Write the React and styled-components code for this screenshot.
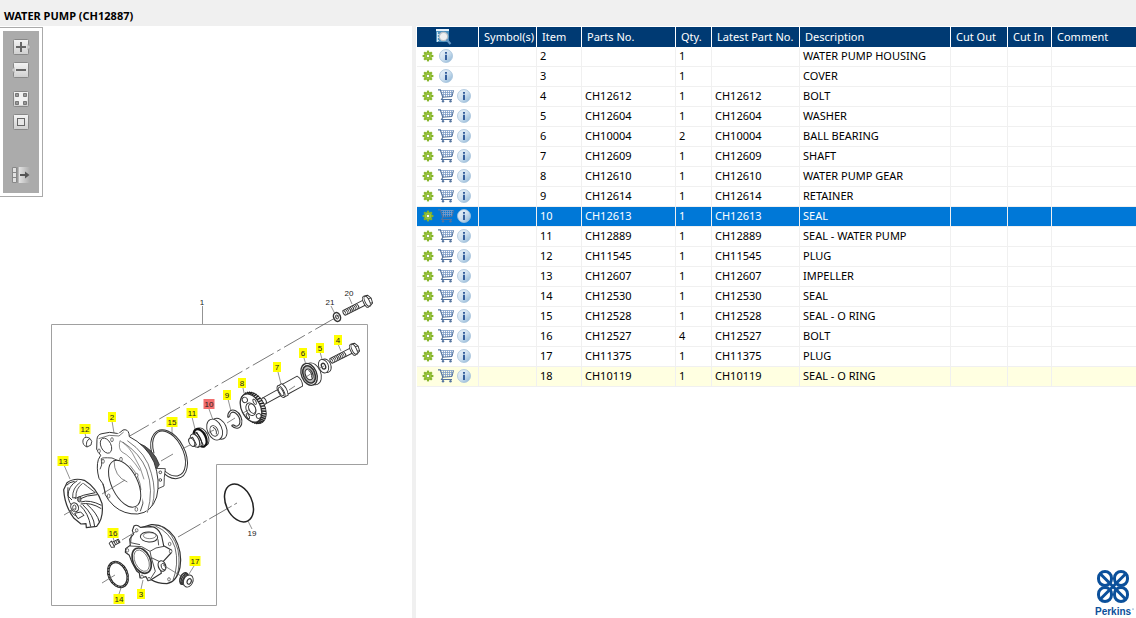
import React from 'react';
import styled, { createGlobalStyle } from 'styled-components';

const GlobalStyle = createGlobalStyle`
  *, *::before, *::after { box-sizing: border-box; }
  body { margin: 0; background: #fff; }
`;

const Page = styled.div`
  display: flex;
  flex-direction: column;
  min-height: 100vh;
  background: #fff;
  color: #000;
  font: 11px/16px "Noto Sans", "Open Sans", sans-serif;
`;

const TitleBar = styled.header`
  height: 26px;
  padding: 8px 4px 2px;
  background: #f0f0f0;
`;

const Title = styled.h1`
  margin: 0;
  font-size: 11px;
  line-height: 16px;
  font-weight: 700;
`;

const Workspace = styled.main`
  flex: 1;
  display: grid;
  grid-template-columns: 412px 4px minmax(0, 1fr);
`;

const DrawingPane = styled.section`
  position: relative;
  overflow: hidden;
`;

const Splitter = styled.div`
  background: #f0f0f0;
`;

const PartsPane = styled.section`
  display: flex;
  flex-direction: column;
  padding: 1px 0 1px 1px;
`;

const Toolbar = styled.div`
  position: absolute;
  top: 1px;
  left: 0;
  width: 43px;
  border: 1px solid #aaa;
  border-left: 0;
  padding: 3px;
  background: #fff;
`;

const ToolList = styled.div`
  display: flex;
  flex-direction: column;
  align-items: center;
  gap: 7px;
  height: 162px;
  padding: 8px 0;
  background: #ababab;
`;

const ToolButton = styled.button`
  display: block;
  width: 20px;
  height: 16px;
  padding: 0;
  border: 0;
  background: none;
  margin-top: ${(p) => p.$space || 0}px;
  svg { display: block; }
`;

const Diagram = styled.svg`
  display: block;
  width: 412px;
  height: 592px;
  font: 8px "Liberation Sans", Arial, sans-serif;
`;

const Table = styled.table`
  width: 100%;
  table-layout: fixed;
  border-collapse: separate;
  border-spacing: 0;
`;

const HeadCell = styled.th`
  height: 20px;
  padding: 0 0 0 5px;
  border-right: 1px solid #fff;
  background: #003a73;
  color: #fff;
  font-weight: 400;
  text-align: left;
  white-space: nowrap;
  line-height: 16px;
  &:last-child { border-right: 0; }
  svg { display: block; margin-left: 13px; }
`;

const rowColors = {
  normal: ['#fff', '#000'],
  selected: ['#0078d7', '#fff'],
  last: ['#ffffe1', '#000'],
};

const Row = styled.tr`
  background: ${(p) => rowColors[p.$tone][0]};
  color: ${(p) => rowColors[p.$tone][1]};
`;

const Cell = styled.td`
  height: 20px;
  padding: 0 0 1px 3px;
  border-right: 1px solid #f0f0f0;
  border-bottom: 1px solid #f0f0f0;
  line-height: 16px;
  white-space: nowrap;
  overflow: hidden;
  &:last-child { border-right: 0; }
`;

const Actions = styled.div`
  display: flex;
  align-items: center;
  margin-left: -1px;
`;

const IconButton = styled.button`
  display: flex;
  align-items: center;
  justify-content: center;
  width: 18px;
  height: 16px;
  padding: 0;
  border: 0;
  background: none;
`;

const Brand = styled.footer`
  display: flex;
  justify-content: flex-end;
  margin-top: auto;
  padding-right: 2px;
  svg { display: block; }
`;

/* ---------- icons ---------- */

const GearIcon = () => (
  <svg width="12" height="12" viewBox="-6 -6 12 12">
    <g fill="#86b52a">
      {[0, 45, 90, 135].map((a) => (
        <rect key={a} x="-1.1" y="-5.4" width="2.2" height="10.8" transform={`rotate(${a})`} />
      ))}
      <circle r="3.9" />
    </g>
    <circle r="2.7" fill="none" stroke="#9fc93c" />
    <circle r="1.7" fill="#fff" stroke="#6c9a1b" strokeWidth=".6" />
  </svg>
);

const CartIcon = () => (
  <svg width="16" height="14" viewBox="0 0 16 14" fill="none" stroke="#54749f">
    <path d="M3 1.500H15.500M3.500 3.500H15M4.200 5.500H14.400M5.500 1.500V8M7.500 1.500V8M9.500 1.500V8M11.500 1.500V8M13.500 1.500V7" stroke="#7f9dc6" strokeWidth=".8" />
    <path d="M15.500 1.500 14 7.500 4.800 8.200" />
    <path d="M0 .8H2.300L4.800 8.200 3.600 10.500H14" strokeWidth="1.200" />
    <circle cx="5" cy="12.300" r="1.200" fill="#54749f" stroke="none" />
    <circle cx="12.500" cy="12.300" r="1.200" fill="#54749f" stroke="none" />
  </svg>
);

const InfoIcon = () => (
  <svg width="14" height="14" viewBox="0 0 14 14">
    <defs>
      <linearGradient id="infoFill" x1="0" y1="0" x2="1" y2="1">
        <stop offset="0" stopColor="#eff6fb" />
        <stop offset=".5" stopColor="#cfe0ef" />
        <stop offset="1" stopColor="#86b1d4" />
      </linearGradient>
    </defs>
    <circle cx="7" cy="7" r="6.5" fill="url(#infoFill)" stroke="#a5c2db" strokeWidth=".8" />
    <path d="M6 3h2v1.700H6zM6 5.700h2v5.200H6z" fill="#355f9c" />
  </svg>
);

const PreviewIcon = () => (
  <svg width="17" height="16" viewBox="0 0 17 16">
    <rect x="1" y="0" width="13" height="2" fill="#e7f2fb" />
    <rect x="1" y="2" width="13" height="11" fill="#4c91bf" />
    <path d="M2.500 3V13M4 5.500H2M4 8.500H2M4 11.500H2" stroke="#e7f2fb" strokeWidth=".8" />
    <circle cx="8.500" cy="7.500" r="4.200" fill="#eef0f1" stroke="#b9c0c6" strokeWidth="1.300" />
    <path d="M11.500 10.500 15.500 15" stroke="#6698c4" strokeWidth="2.200" />
  </svg>
);

const ToolFace = () => (
  <>
    <linearGradient id="toolFace" x1="0" y1="0" x2="0" y2="1">
      <stop offset="0" stopColor="#f4f4f4" />
      <stop offset="1" stopColor="#cfcfcf" />
    </linearGradient>
    <rect x="2.500" y=".5" width="15" height="15" rx="1" fill="url(#toolFace)" stroke="#888" />
  </>
);

const toolDrawings = {
  expand: (
    <>
      <ToolFace />
      <path d="M17 5.500 19.300 8 17 10.500z" fill="#e4e4e4" stroke="#999" strokeWidth=".6" />
      <path d="M5 8H15M10 3V13" stroke="#666" strokeWidth="2" />
    </>
  ),
  collapse: (
    <>
      <ToolFace />
      <path d="M3 5.500.7 8 3 10.500z" fill="#e4e4e4" stroke="#999" strokeWidth=".6" />
      <path d="M5 8H15" stroke="#666" strokeWidth="2" />
    </>
  ),
  tiles: (
    <>
      <ToolFace />
      <path d="M8 2H12V14H8zM4 6H16V10H4z" fill="#f1f1f1" />
      <path d="M4.500 2.500h3v3h-3zM12.500 2.500h3v3h-3zM4.500 10.500h3v3h-3zM12.500 10.500h3v3h-3z" fill="#999" stroke="#777" />
    </>
  ),
  fit: (
    <>
      <ToolFace />
      <rect x="6.500" y="4.500" width="7" height="7" fill="#e6e6e6" stroke="#666" />
    </>
  ),
  panel: (
    <>
      <linearGradient id="panelFade">
        <stop offset="0" stopColor="#e8e8e8" />
        <stop offset="1" stopColor="#e8e8e8" stopOpacity="0" />
      </linearGradient>
      <rect x="7" y="0" width="12" height="16" fill="url(#panelFade)" />
      <path d="M1.500.5h4v15h-4zM1.500 5.500h4M1.500 10.500h4" fill="#e2e2e2" stroke="#888" />
      <path d="M7 0V16" stroke="#888" />
      <path d="M9 8H15" stroke="#555" strokeWidth="2" />
      <path d="M14 4.500 18.500 8 14 11.500z" fill="#555" />
    </>
  ),
};

const tools = [
  { id: 'expand', label: 'Zoom in' },
  { id: 'collapse', label: 'Zoom out' },
  { id: 'tiles', label: 'Tile view', space: 6 },
  { id: 'fit', label: 'Fit to window' },
  { id: 'panel', label: 'Move panel', space: 30 },
];

const PerkinsLogo = () => (
  <svg width="40" height="48" viewBox="0 0 40 48" role="img" aria-label="Perkins">
    <g fill="none" stroke="#0b509b" strokeWidth="3">
      <rect x="4.500" y="2.500" width="13" height="14" rx="6.500" />
      <rect x="20.500" y="2.500" width="13" height="14" rx="6.500" />
      <rect x="4.500" y="18.500" width="13" height="14" rx="6.500" />
      <rect x="20.500" y="18.500" width="13" height="14" rx="6.500" />
      <path d="M6 4.500 32 30.500M32 4.500 6 30.500" strokeWidth="3" />
    </g>
    <text x="1" y="46" fontFamily="Liberation Sans, Arial, sans-serif" fontWeight="700" fontSize="10" fill="#0b509b">Perkins</text>
    <circle cx="39" cy="40" r=".6" fill="#0b509b" />
  </svg>
);

/* ---------- exploded drawing ---------- */

const range = (n) => Array.from({ length: n }, (_, i) => i);

const Bolt = ({ x, y, s = 1 }) => (
  <g transform={`translate(${x} ${y}) rotate(-27) scale(${s})`}>
    <path d="M0-2.700H24V2.700H0Q-1.600 0 0-2.700z" />
    {range(9).map((i) => (
      <path key={i} d={`M${1 + i * 1.8}-2.800q1.400 2.800 0 5.600`} />
    ))}
    <ellipse cx="24.500" cy="0" rx="2.400" ry="6" />
    <path d="M25-6 29-5.200 31-1 30 4 26 6" />
    <ellipse cx="26" cy="0" rx="2.200" ry="5.400" />
    <path d="M27.800-2 30.800-1M27.800 2.800 30 4" />
  </g>
);

const Gear = () => (
  <g transform="translate(251 408) rotate(-26)">
    <ellipse cx="3" cy="1.500" rx="10.500" ry="16.500" />
    {range(36).map((i) => {
      const a = (i * Math.PI) / 18;
      const c = Math.cos(a);
      const s = Math.sin(a);
      return (
        <path key={i} d={`M${9 * c} ${14.5 * s}L${11 * c + 2.6} ${17 * s + 1}`} stroke="#222" strokeWidth="1.500" />
      );
    })}
    <ellipse rx="9.500" ry="15" strokeWidth="1.300" />
    <ellipse cx="-.6" cy="1" rx="4.600" ry="6.600" />
    <ellipse cx=".8" cy="1" rx="3.200" ry="5" />
    <ellipse cx="-2" cy="-10" rx="2.600" ry="2.800" />
    <ellipse cx="3.400" cy="10.500" rx="2.400" ry="2.400" />
    <ellipse cx="6" cy="-4" rx="1.300" ry="2.800" />
    <ellipse cx="-6.400" cy="6" rx="1.200" ry="2.800" />
  </g>
);

const Housing = () => (
  <g transform="translate(40 400) scale(.3333)" strokeWidth="2.600">
    <path d="M292 128Q340 144 358 194L345 212Q320 160 292 128z" fill="#555" />
    <path d="M340 205 376 206 373 232 372 258 350 268z" />
    <circle cx="361" cy="217" r="4" />
    <circle cx="361" cy="240" r="4" />
    <path d="M170 148 171 118Q172 103 186 101L209 97 236 101 249 90Q263 86 267 101L268 110Q318 135 342 186 362 242 350 291 334 338 293 342 252 344 222 318 203 300 196 284L190 253 177 235Q168 202 175 179L182 166z" strokeWidth="3" />
    <path d="M184 176Q186 172 216 174 268 192 295 236 322 290 301 334M184 176Q188 198 180 208M196 280Q194 264 188 252" />
    <path d="M176 116 208 106 237 108 251 96M248 126Q300 160 320 210 342 270 322 338M262 122Q320 160 334 220 350 274 336 318" strokeWidth="2" />
    <path d="M240 122Q270 140 286 176 302 200 312 238M240 122Q234 146 246 156 272 168 300 212" strokeWidth="1.600" />
    <ellipse cx="198" cy="137" rx="15" ry="24" transform="rotate(-26 198 137)" strokeWidth="2.500" />
    <ellipse cx="254" cy="251" rx="39" ry="76" transform="rotate(-26 254 251)" strokeWidth="3" />
    <path d="M222 180Q222 230 262 246M270 196Q300 230 303 270" strokeWidth="1.800" fill="none" />
    {[[216, 119], [177, 153], [189, 184], [243, 178], [290, 226], [206, 288], [289, 328]].map(([x, y]) => (
      <ellipse key={x} cx={x} cy={y} rx="4" ry="6" strokeWidth="2" />
    ))}
  </g>
);

const Impeller = () => (
  <g transform="translate(40 400) scale(.3333)" strokeWidth="2.600">
    <path d="M71 269 81 248Q103 232 133 241 170 263 186 310 192 354 170 379L139 383 138 371 123 372 102 355Q74 319 71 269z" strokeWidth="3.600" />
    <g fill="none">
      <path d="M80 256Q88 246 104 244M84 262Q80 300 96 318M112 242Q84 258 84 288L96 300" strokeWidth="3" />
      <path d="M122 246Q96 264 98 294L108 292Q106 266 128 250" />
      <path d="M104 296Q128 284 166 278M112 300Q142 284 172 284M122 306Q150 298 184 316M122 312Q152 306 184 326" strokeWidth="3" />
      <path d="M120 316Q146 340 152 380M128 314Q162 346 164 380M140 312Q172 340 178 366" strokeWidth="3" />
      <path d="M130 250Q158 272 166 278M90 330Q98 346 116 352" />
    </g>
    <ellipse cx="104" cy="322" rx="11" ry="14" transform="rotate(-25 104 322)" strokeWidth="3" />
    <ellipse cx="103" cy="323" rx="5" ry="8" />
    <ellipse cx="118" cy="298" rx="5" ry="8" fill="#999" />
    <path d="M104 340 122 336 132 346 114 356z" strokeWidth="3" />
  </g>
);

const Cover = () => (
  <g transform="translate(90 500) scale(.3333)" strokeWidth="2.600">
    <path d="M150 84 184 74Q225 72 253 111 278 155 270 202 261 245 231 251 201 250 184 239z" strokeWidth="3.600" />
    <path d="M196 78Q240 96 255 142 268 192 248 244M212 78Q250 98 264 150 272 195 260 228" strokeWidth="2.200" />
    <path d="M127 92 132 78Q140 72 151 82L182 80Q204 80 215 108L221 137 244 150 243 159 220 184 211 203 214 220 182 240 174 242 168 230 150 234 148 219 140 213 125 185 118 166 106 157 107 146 121 136 119 117 131 102z" strokeWidth="3.400" />
    <ellipse cx="155" cy="182" rx="26" ry="40" transform="rotate(-25 155 182)" strokeWidth="5" />
    <ellipse cx="155" cy="182" rx="20" ry="34" transform="rotate(-25 155 182)" strokeWidth="1.800" />
    <ellipse cx="177" cy="111" rx="26" ry="15" transform="rotate(4 177 111)" strokeWidth="3" />
    <ellipse cx="179" cy="107" rx="19" ry="9" strokeWidth="1.800" />
    <g fill="none">
      <path d="M120 138 155 140 180 154 198 144 222 139M180 154 184 173 207 184M184 173 196 214 182 236M124 104 122 128 150 134M204 118 206 136" />
    </g>
    <ellipse cx="216" cy="198" rx="11" ry="16" transform="rotate(-20 216 198)" strokeWidth="3.600" />
    <ellipse cx="220" cy="200" rx="6" ry="10" transform="rotate(-20 220 200)" />
    {[[140, 91], [112, 151], [242, 154], [177, 237], [237, 238], [239, 132], [156, 230]].map(([x, y]) => (
      <ellipse key={x} cx={x} cy={y} rx="4" ry="5" strokeWidth="2" />
    ))}
  </g>
);

const callouts = [
  ['1', 202, 302], ['20', 349, 293], ['21', 330, 302], ['19', 252, 533],
  ['4', 338, 340, 'y'], ['5', 320, 348, 'y'], ['6', 303, 353, 'y'], ['7', 277, 367, 'y'],
  ['8', 242, 383, 'y'], ['9', 227, 395, 'y'], ['10', 209, 404, 'r'], ['11', 192, 413, 'y'],
  ['15', 172, 422, 'y'], ['2', 112, 417, 'y'], ['12', 85, 429, 'y'], ['13', 63, 461, 'y'],
  ['16', 113, 533, 'y'], ['17', 195, 561, 'y'], ['14', 119, 599, 'y'], ['3', 141, 594, 'y'],
];

const calloutFill = { y: '#ffff00', r: '#f26d6d' };

const Callout = ({ text, x, y, tone }) => {
  const w = text.length > 1 ? 11 : 8;
  return (
    <g>
      {tone && <rect x={x - w / 2} y={y - 5} width={w} height="10" fill={calloutFill[tone]} />}
      <text x={x} y={y + 3} textAnchor="middle" fill="#222">{text}</text>
    </g>
  );
};

const PumpDiagram = () => (
  <Diagram viewBox="0 26 412 592" role="img" aria-label="Exploded view of the water pump">
    <path d="M51.500 324.500H367.500V464.500H216.500V605.500H51.500z" fill="none" stroke="#a0a0a0" />
    <g fill="none" stroke="#777" strokeWidth=".8">
      <path d="M202.500 306V324M349 297 352 304M331 306 335 314M338 344 341 351M320 352 322 359M304 358 306 365M278 372 281 384M243 388 244 393M228 399 231 411M209 409 213 420M192 417 195 429M172 427V433M112 421 114 433M85 433 86 438M64 465 70 479M113 537 114 541M194 566 189 574M119 594 121 588M141 589 143 580M252 529 248 521" />
      <path d="M128 437 335 318" strokeDasharray="24 4 4 4" stroke="#555" />
      <path d="M178 537 237 503" strokeDasharray="26 3 4 3" stroke="#555" />
    </g>
    <g fill="#fff" stroke="#333" strokeWidth=".9" strokeLinejoin="round">
      <Bolt x={331} y={361} />
      <Bolt x={344} y={313} />
      <g transform="rotate(-22 337 317)">
        <ellipse cx="337" cy="317" rx="3.400" ry="4.500" strokeWidth="1.500" />
        <ellipse cx="337" cy="317" rx="1.300" ry="2" />
      </g>
      <g transform="rotate(-22 324 366)">
        <ellipse cx="326" cy="366.500" rx="4.800" ry="7" />
        <ellipse cx="323.500" cy="366" rx="4.800" ry="7" />
        <ellipse cx="323.500" cy="366" rx="2" ry="3" strokeWidth="1.300" />
      </g>
      <g transform="rotate(-22 310 374)">
        <ellipse cx="313" cy="375" rx="7.600" ry="11.400" />
        <ellipse cx="309" cy="374" rx="7.600" ry="11.400" strokeWidth="1.300" />
        <ellipse cx="309" cy="374" rx="5.800" ry="9" fill="#bbb" strokeWidth="1.600" />
        <ellipse cx="309" cy="374" rx="3.600" ry="5.600" strokeWidth="1.200" />
        <path d="M310 370q3 4 0 8" fill="none" />
      </g>
      <g transform="translate(264 401) rotate(-29)">
        <path d="M0-3.400H20V3.400H0z" />
        <ellipse cx="0" cy="0" rx="2" ry="3.400" />
        <path d="M24-5.600H41Q44 0 41 5.600H24z" />
        <path d="M19-6.500H24Q27 0 24 6.500H19z" />
        <ellipse cx="19.500" cy="0" rx="2.600" ry="6.500" />
        <ellipse cx="19.500" cy="0" rx="1.800" ry="4.600" />
      </g>
      <Gear />
      <g transform="rotate(-24 234 419)" fill="none">
        <path d="M229 415A6.500 9.500 0 1 1 229 424M231 415A4.600 7.400 0 1 1 231 424M229 415H231M229 424H231" strokeWidth="1.100" />
      </g>
      <g transform="rotate(-24 216 429)">
        <ellipse cx="219" cy="430" rx="7.200" ry="11" />
        <ellipse cx="214.500" cy="429" rx="7.200" ry="11" />
        <ellipse cx="213.500" cy="430" rx="3.800" ry="5.500" />
        <path d="M214 426q3 4 0 8" fill="none" />
      </g>
      <g transform="translate(198 439) rotate(-27)">
        <ellipse cx="5" cy="0" rx="5.500" ry="9.500" />
        <ellipse cx="2.500" cy="0" rx="5.500" ry="9.500" stroke="#111" strokeWidth="2.300" />
        <path d="M-4-6.500H2V7.500H-4z" />
        <path d="M-1-6.500q3 6.500 0 13M1-7q3 7 0 14" stroke="#222" strokeWidth="1" fill="none" />
        <ellipse cx="-3.500" cy="0" rx="4" ry="7" />
        <path d="M-8-4H-4V4.400H-8z" />
        <ellipse cx="-7" cy="0" rx="2.600" ry="4.400" />
      </g>
      <g transform="rotate(-26 171 455)" fill="none">
        <path d="M154.500 445A16 26 0 1 1 155 464M156.500 446A14 24 0 1 1 157.500 464" strokeWidth="1" />
      </g>
      <Housing />
      <path d="M83 440Q84 436.500 88 437.500L90 438.500Q93 441 91 445L87 447Q82 445 83 440zM90 438.500Q85 441 87 447" />
      <Impeller />
      <Cover />
      <g transform="rotate(-24 118 574.500)" fill="none">
        <ellipse cx="118" cy="574.500" rx="9" ry="13" stroke="#222" strokeWidth="2.600" />
        <ellipse cx="118" cy="574.500" rx="9" ry="13" stroke="#bbb" strokeWidth=".7" strokeDasharray="2 1" />
      </g>
      <ellipse cx="239" cy="503" rx="13" ry="20" transform="rotate(-25 239 503)" fill="none" stroke="#222" strokeWidth="1.500" />
      <g transform="translate(113 544) rotate(-28)">
        <path d="M0-1.800H7V1.800H0zM-3-2.500 0-3.400V3.400L-3 2.200z" />
        <path d="M2-2V2M4-2V2M6-2V2" />
      </g>
      <g transform="translate(186 580) rotate(24)">
        <ellipse cx="-2.500" cy="-.500" rx="3.600" ry="6" strokeWidth="1.600" />
        <path d="M-3-5.500H1V5.500H-3z" />
        <path d="M-3-6q-3 6 0 12M-1-6q-3 6 0 12" fill="none" strokeWidth="1.300" />
        <ellipse cx="2.500" cy="0" rx="4.600" ry="6.300" />
        <ellipse cx="3.500" cy="0" rx="2" ry="2.900" strokeWidth="1.200" />
      </g>
    </g>
    <path d="M64 515 76 508M102 494 125 480M161 461 173 454M182 449 190 445M205 434 214 430M227 423 235 418M243 413 250 409M289 390 295 386M303 379 312 373M318 369 324 366M102 583 115 575M163 565 181 576M122 540 137 531M333 319 340 315" fill="none" stroke="#666" strokeWidth=".8" />
    {callouts.map(([text, x, y, tone]) => (
      <Callout key={text} text={text} x={x} y={y} tone={tone} />
    ))}
  </Diagram>
);

/* ---------- parts list ---------- */

const columns = [
  ['Symbol(s)', 58], ['Item', 45], ['Parts No.', 94], ['Qty.', 36], ['Latest Part No.', 88],
  ['Description', 151], ['Cut Out', 57], ['Cut In', 44], ['Comment', null],
];

const parts = [
  [2, '', 1, 'WATER PUMP HOUSING'],
  [3, '', 1, 'COVER'],
  [4, 'CH12612', 1, 'BOLT'],
  [5, 'CH12604', 1, 'WASHER'],
  [6, 'CH10004', 2, 'BALL BEARING'],
  [7, 'CH12609', 1, 'SHAFT'],
  [8, 'CH12610', 1, 'WATER PUMP GEAR'],
  [9, 'CH12614', 1, 'RETAINER'],
  [10, 'CH12613', 1, 'SEAL'],
  [11, 'CH12889', 1, 'SEAL - WATER PUMP'],
  [12, 'CH11545', 1, 'PLUG'],
  [13, 'CH12607', 1, 'IMPELLER'],
  [14, 'CH12530', 1, 'SEAL'],
  [15, 'CH12528', 1, 'SEAL - O RING'],
  [16, 'CH12527', 4, 'BOLT'],
  [17, 'CH11375', 1, 'PLUG'],
  [18, 'CH10119', 1, 'SEAL - O RING'],
];

const toneOf = (item) => (item === 10 ? 'selected' : item === 18 ? 'last' : 'normal');

const PartRow = ({ item, number, qty, description }) => (
  <Row $tone={toneOf(item)} aria-selected={item === 10}>
    <Cell>
      <Actions>
        <IconButton type="button" aria-label="Options"><GearIcon /></IconButton>
        {number && <IconButton type="button" aria-label="Add to cart"><CartIcon /></IconButton>}
        <IconButton type="button" aria-label="Information"><InfoIcon /></IconButton>
      </Actions>
    </Cell>
    <Cell />
    <Cell>{item}</Cell>
    <Cell>{number}</Cell>
    <Cell>{qty}</Cell>
    <Cell>{number}</Cell>
    <Cell>{description}</Cell>
    <Cell />
    <Cell />
    <Cell />
  </Row>
);

export default function App() {
  return (
    <>
      <GlobalStyle />
      <Page>
        <TitleBar>
          <Title>WATER PUMP (CH12887)</Title>
        </TitleBar>
        <Workspace>
          <DrawingPane>
            <PumpDiagram />
            <Toolbar role="toolbar" aria-label="Drawing tools">
              <ToolList>
                {tools.map((t) => (
                  <ToolButton key={t.id} type="button" aria-label={t.label} $space={t.space}>
                    <svg width="20" height="16" viewBox="0 0 20 16">{toolDrawings[t.id]}</svg>
                  </ToolButton>
                ))}
              </ToolList>
            </Toolbar>
          </DrawingPane>
          <Splitter />
          <PartsPane>
            <Table>
              <colgroup>
                <col width="62" />
                {columns.map(([name, width]) => (
                  <col key={name} width={width || undefined} />
                ))}
              </colgroup>
              <thead>
                <tr>
                  <HeadCell aria-label="Actions"><PreviewIcon /></HeadCell>
                  {columns.map(([name]) => (
                    <HeadCell key={name}>{name}</HeadCell>
                  ))}
                </tr>
              </thead>
              <tbody>
                {parts.map(([item, number, qty, description]) => (
                  <PartRow key={item} item={item} number={number} qty={qty} description={description} />
                ))}
              </tbody>
            </Table>
            <Brand>
              <PerkinsLogo />
            </Brand>
          </PartsPane>
        </Workspace>
      </Page>
    </>
  );
}
